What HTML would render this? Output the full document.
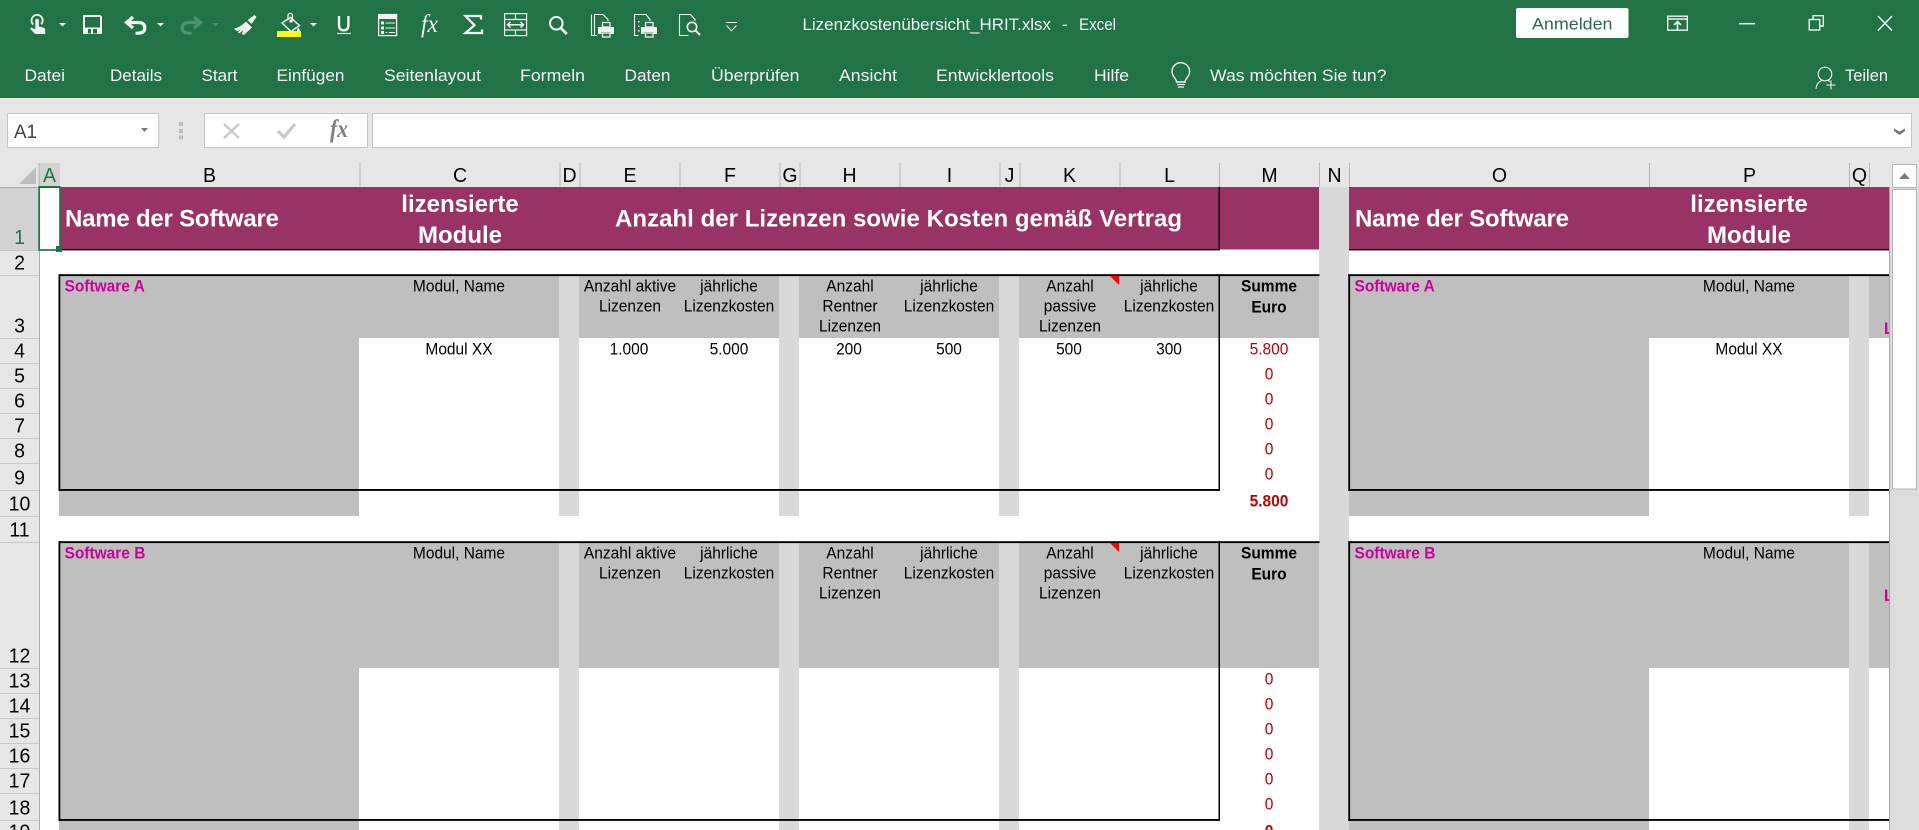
<!DOCTYPE html>
<html lang="de"><head><meta charset="utf-8"><title>Lizenzkostenübersicht_HRIT.xlsx - Excel</title>
<style>
html,body{margin:0;padding:0;width:1919px;height:830px;overflow:hidden;background:#fff}
svg{display:block;font-family:"Liberation Sans",Arial,sans-serif}
.rb{font-size:17px;fill:#f3f3f3}
.hd{font-size:19.5px;fill:#000;text-anchor:middle;transform-box:fill-box;transform-origin:center;transform:translateY(-1.2px) scaleY(1.06)}
.ch{font-size:15.5px;fill:#000;text-anchor:middle;transform-box:fill-box;transform-origin:center;transform:translateY(-.8px) scaleY(1.08)}
.bh{font-size:15.5px;fill:#000;text-anchor:middle;font-weight:bold;transform-box:fill-box;transform-origin:center;transform:translateY(-.8px) scaleY(1.08)}
.mg{font-size:15.5px;fill:#cc0099;font-weight:bold;transform-box:fill-box;transform-origin:center;transform:translateY(-.8px) scaleY(1.08)}
.rd{font-size:15.5px;fill:#c00000;text-anchor:middle;transform-box:fill-box;transform-origin:center;transform:translateY(-.8px) scaleY(1.08)}
.wt{font-size:24px;fill:#fff;font-weight:bold}
</style></head><body>
<svg width="1919" height="830" viewBox="0 0 1919 830" xmlns="http://www.w3.org/2000/svg">
<defs><clipPath id="sheet"><rect x="0" y="187" width="1889" height="643"/></clipPath></defs>
<rect width="1919" height="830" fill="#fff"/>
<!-- ribbon -->
<rect width="1919" height="98" fill="#217346"/>
<rect y="98" width="1919" height="90" fill="#e6e6e6"/>

<!-- QAT icons -->
<g fill="#f2f2f2" stroke="none">
<path d="M35.3 20.5a1.8 1.8 0 0 1 3.6 0v6l4.6 1.3q1.7.5 1.7 2.2v4H35l-5-5.4 1.2-1.2 4.1 2z"/>
<path d="M59 23h7l-3.5 3.5z"/>
<path fill-rule="evenodd" d="M83 15h17.5l1.5 1.5V34H83zM85 17v10.5h15V17zM88 29v4.5h3V29zM93 29v4.5h4V29z"/>
<path d="M157 23h7l-3.5 3.5z"/>
<path d="M310 23h7l-3.5 3.500z"/>
<path d="M246 21.5l6 6-8 7.5-2.2-1 1.6-4-3.8 3.2-1.8-.7 3-3.5-3.5 2.4-2-1.5-1.3-1.4q5-.4 12-6.900z"/>
<path d="M247.500 20l7-5 2 2-5 7z"/>
<path d="M378 14h19v5h-19z"/>
<path d="M381 21.500h3v3h-3zM381 26.500h3v3h-3zM381 31h3v3h-3z"/>
</g>
<path d="M33.200 24.500a5.600 5.600 0 1 1 8-.2" fill="none" stroke="#f2f2f2" stroke-width="1.800"/>
<path d="M133 17l-6.500 5.500 6.500 5.500M127 22.500h11q6.800 0 6.800 5.300t-6.800 5.400h-2.500" fill="none" stroke="#f2f2f2" stroke-width="3.200"/>
<path d="M194 17l6.500 5.500-6.500 5.500M200 22.500h-11q-6.800 0-6.800 5.300t6.800 5.400h2.500" fill="none" stroke="#4f9070" stroke-width="3.200"/>
<path d="M212 23h7l-3.500 3.500z" fill="#4f9070"/>
<g fill="none" stroke="#f2f2f2">
<path d="M290.500 17.500l9 8-8.500 6-9-8.500z" stroke-width="1.500"/>
<path d="M288 20v-4.500a2.200 2.200 0 0 1 4.400 0V21" stroke-width="1.300"/>
<path d="M339 16v9q0 5.300 4.700 5.300t4.700-5.300v-9" stroke-width="2.400"/>
<path d="M337 33.500h14" stroke-width="1.200"/>
<rect x="378.600" y="14.600" width="18" height="21" stroke-width="1.300"/>
<path d="M385.500 23h9.500M385.500 28h9.500M385.500 32.500h2M389 32.500h6" stroke-width="1.100"/>
<path d="M481 19.500V16H465.500l9 9.200-9 7.800H482v-3.500" stroke-width="2.300"/>
<rect x="504.600" y="13.600" width="22" height="22" stroke-width="1.200"/>
<path d="M505 19.500h21.500M505 30h21.500M515.500 14v5.500M515.500 30v5.500" stroke-width="1.200"/>
<path d="M507.500 24.700h16M510.500 22l-3 2.700 3 2.700M520.500 22l3 2.700-3 2.700" stroke-width="1.500"/>
<circle cx="556.300" cy="23.300" r="6.300" stroke-width="2"/>
<path d="M560.800 28l6 6" stroke-width="2.800"/>
<path d="M595.500 35.500h-4V14.500M597 35.500h-2.500V14.500h8.500l5 5v1.500" stroke-width="1.100"/>
<path d="M638.500 35.500h-4V14.500h11.500l4 5v1.500" stroke-width="1.100"/>
<path d="M688.500 35.500h-9V14.500h11l4.500 5v1.500" stroke-width="1.100"/>
<circle cx="692" cy="27" r="4.700" stroke-width="1.600"/>
<path d="M695.500 30.500l4.500 4.500" stroke-width="2"/>
<path d="M726 22.500h11M726.500 25.500l5 5.300 5-5.300" stroke-width="1"/>
</g>
<path d="M298 27q2 3 2 4h-3q0-1 1-4z" fill="#f2f2f2"/>
<rect x="289.500" y="19.500" width="3" height="3" fill="#f2f2f2"/>
<rect x="277" y="31" width="24" height="6" fill="#ffff00"/>
<g fill="#f2f2f2">
<path d="M598 27h16v7h-3.500v-2h-9v2H598z"/>
<path d="M641 27h16v7h-3.500v-2h-9v2H641z"/>
<path d="M638 21h1.500v1.500H638zM638 25.500h1.500V27H638zM638 30h1.500v1.500H638z"/>
</g>
<g fill="none" stroke="#f2f2f2" stroke-width="1.300">
<rect x="602.500" y="22.500" width="7.500" height="4.500"/><rect x="602.500" y="33" width="7.500" height="4"/>
<rect x="645.500" y="22.500" width="7.500" height="4.500"/><rect x="645.500" y="33" width="7.500" height="4"/>
</g>
<text x="421" y="32" font-family="'Liberation Serif',serif" font-style="italic" font-size="25" fill="#f2f2f2" textLength="17" lengthAdjust="spacingAndGlyphs">fx</text>

<!-- title -->
<text x="802.500" y="30" font-size="17" fill="#f3f3f3" textLength="248.500" lengthAdjust="spacingAndGlyphs">Lizenzkostenübersicht_HRIT.xlsx</text>
<text x="1062" y="30" font-size="17" fill="#f3f3f3">-</text>
<text x="1079" y="30" font-size="17" fill="#f3f3f3" textLength="37" lengthAdjust="spacingAndGlyphs">Excel</text>
<rect x="1516" y="8" width="112.500" height="30" rx="2" fill="#fff"/>
<text x="1532" y="29.500" font-size="17" fill="#2a6a49" textLength="80.500" lengthAdjust="spacingAndGlyphs">Anmelden</text>

<!-- window controls -->
<g fill="none" stroke="#f2f2f2" stroke-width="1.400">
<rect x="1667.700" y="16.200" width="19.600" height="14"/>
<path d="M1667.700 19h19.600" stroke-width="1.500"/>
<path d="M1677.500 29.500v-8M1674 25l3.500-3.500 3.500 3.500" stroke-width="1.600"/>
<path d="M1739 23.700h16" stroke-width="1.500"/>
<rect x="1809.200" y="19.500" width="10.500" height="10.500"/>
<path d="M1813 19v-3.300h10.300v10.300h-3.500"/>
<path d="M1878 16l14 14.500M1892 16l-14 14.500" stroke-width="1.500"/>
<circle cx="1825" cy="74" r="6.800" stroke-width="1.100"/>
<path d="M1816 89c0-4 2.500-7 5.800-8.600M1828 80.500l2 1" stroke-width="1.100"/>
<path d="M1831 80.500v9M1826.500 85h9" stroke-width="1.100"/>
<path d="M1176.500 82c0-4-4.500-5-4.500-10.500a8.800 8.800 0 0 1 17.600 0c0 5.500-4.500 6.500-4.500 10.500z" stroke-width="1.400"/>
<path d="M1177 84.500h8M1178 87h6" stroke-width="1.300"/>
</g>

<!-- tabs -->
<text class="rb" x="24.500" y="81" textLength="40.500" lengthAdjust="spacingAndGlyphs">Datei</text>
<text class="rb" x="110" y="81" textLength="52" lengthAdjust="spacingAndGlyphs">Details</text>
<text class="rb" x="201.500" y="81" textLength="36" lengthAdjust="spacingAndGlyphs">Start</text>
<text class="rb" x="276.500" y="81" textLength="68" lengthAdjust="spacingAndGlyphs">Einfügen</text>
<text class="rb" x="384" y="81" textLength="97" lengthAdjust="spacingAndGlyphs">Seitenlayout</text>
<text class="rb" x="520" y="81" textLength="65" lengthAdjust="spacingAndGlyphs">Formeln</text>
<text class="rb" x="624.500" y="81" textLength="46" lengthAdjust="spacingAndGlyphs">Daten</text>
<text class="rb" x="711" y="81" textLength="88.500" lengthAdjust="spacingAndGlyphs">Überprüfen</text>
<text class="rb" x="839" y="81" textLength="58" lengthAdjust="spacingAndGlyphs">Ansicht</text>
<text class="rb" x="936" y="81" textLength="118" lengthAdjust="spacingAndGlyphs">Entwicklertools</text>
<text class="rb" x="1094" y="81" textLength="35" lengthAdjust="spacingAndGlyphs">Hilfe</text>
<text class="rb" x="1210" y="81" textLength="176.500" lengthAdjust="spacingAndGlyphs">Was möchten Sie tun?</text>
<text class="rb" x="1845" y="81" textLength="43" lengthAdjust="spacingAndGlyphs">Teilen</text>

<!-- formula bar -->
<rect x="7.500" y="113.500" width="151" height="34" fill="#fff" stroke="#c6c6c6"/>
<text x="14" y="138" font-size="19px" fill="#444" textLength="23" lengthAdjust="spacingAndGlyphs">A1</text>
<path d="M141 128h7l-3.500 4z" fill="#777"/>
<path d="M179 122h4v4h-4zM179 129h4v4h-4zM179 135.500h4v4h-4z" fill="#bdbdbd"/>
<rect x="204.500" y="113.500" width="163" height="34" fill="#fff" stroke="#c6c6c6"/>
<path d="M224 124l15 14M239 124l-15 14" stroke="#c8c8c8" stroke-width="2.400" fill="none"/>
<path d="M278 131l6 6 11-13" stroke="#c8c8c8" stroke-width="3.200" fill="none"/>
<text x="330" y="137" font-family="'Liberation Serif',serif" font-style="italic" font-weight="bold" font-size="25" fill="#808080" textLength="18" lengthAdjust="spacingAndGlyphs">fx</text>
<rect x="372.500" y="113.500" width="1539" height="34" fill="#fff" stroke="#c6c6c6"/>
<path d="M1894 128.500l5.500 3 5.500-3v2.500l-5.500 4-5.500-4z" fill="#777"/>

<!-- column header -->
<rect x="0" y="163" width="1889" height="24" fill="#e6e6e6"/>
<rect x="39" y="163" width="21" height="24" fill="#d2d2d2"/>
<path d="M19 184l17-17v17z" fill="#bdbdbd"/>
<rect x="0" y="187" width="39" height="643" fill="#e6e6e6"/>
<rect x="0" y="187" width="39" height="63" fill="#d2d2d2"/>
<rect x="39" y="187" width="1" height="643" fill="#adadad"/>
<rect x="0" y="187" width="1889" height="1" fill="#ababab"/>
<g fill="#b6b6b6">
<rect x="38.500" y="163" width="1" height="24"/><rect x="359.500" y="163" width="1" height="24"/><rect x="559.500" y="163" width="1" height="24"/><rect x="579.500" y="163" width="1" height="24"/><rect x="679.500" y="163" width="1" height="24"/><rect x="779.500" y="163" width="1" height="24"/><rect x="799.500" y="163" width="1" height="24"/><rect x="899.500" y="163" width="1" height="24"/><rect x="999.500" y="163" width="1" height="24"/><rect x="1019.500" y="163" width="1" height="24"/><rect x="1119.500" y="163" width="1" height="24"/><rect x="1219" y="163" width="1" height="24"/><rect x="1319" y="163" width="1" height="24"/><rect x="1349" y="163" width="1" height="24"/><rect x="1649" y="163" width="1" height="24"/><rect x="1849" y="163" width="1" height="24"/><rect x="1869" y="163" width="1" height="24"/>
</g>
<g fill="#c8c8c8">
<rect y="250" width="39" height="1"/><rect y="275" width="39" height="1"/><rect y="338" width="39" height="1"/><rect y="363" width="39" height="1"/><rect y="388" width="39" height="1"/><rect y="413" width="39" height="1"/><rect y="438" width="39" height="1"/><rect y="463" width="39" height="1"/><rect y="490" width="39" height="1"/><rect y="516" width="39" height="1"/><rect y="542" width="39" height="1"/><rect y="668" width="39" height="1"/><rect y="693" width="39" height="1"/><rect y="718" width="39" height="1"/><rect y="743" width="39" height="1"/><rect y="768" width="39" height="1"/><rect y="793" width="39" height="1"/><rect y="820" width="39" height="1"/>
</g>
<text class="hd" x="49.500" y="183" style="fill:#217346">A</text>
<text class="hd" x="209.500" y="183">B</text><text class="hd" x="460" y="183">C</text><text class="hd" x="569.500" y="183">D</text><text class="hd" x="630" y="183">E</text><text class="hd" x="730" y="183">F</text><text class="hd" x="790" y="183">G</text><text class="hd" x="849.500" y="183">H</text><text class="hd" x="949.500" y="183">I</text><text class="hd" x="1009.500" y="183">J</text><text class="hd" x="1069.500" y="183">K</text><text class="hd" x="1169.500" y="183">L</text><text class="hd" x="1269.500" y="183">M</text><text class="hd" x="1334.500" y="183">N</text><text class="hd" x="1499.500" y="183">O</text><text class="hd" x="1749.500" y="183">P</text><text class="hd" x="1859.500" y="183">Q</text>
<!-- row numbers -->
<text class="hd" x="19.500" y="245" style="fill:#217346">1</text>
<text class="hd" x="19.500" y="270.500">2</text><text class="hd" x="19.500" y="333.500">3</text><text class="hd" x="19.500" y="358.500">4</text><text class="hd" x="19.500" y="383.500">5</text><text class="hd" x="19.500" y="408.500">6</text><text class="hd" x="19.500" y="433.500">7</text><text class="hd" x="19.500" y="458.500">8</text><text class="hd" x="19.500" y="485.500">9</text><text class="hd" x="19.500" y="511.500">10</text><text class="hd" x="19.500" y="537.500">11</text><text class="hd" x="19.500" y="663.500">12</text><text class="hd" x="19.500" y="688.500">13</text><text class="hd" x="19.500" y="713.500">14</text><text class="hd" x="19.500" y="738.500">15</text><text class="hd" x="19.500" y="763.500">16</text><text class="hd" x="19.500" y="788.500">17</text><text class="hd" x="19.500" y="815.500">18</text><text class="hd" x="19.500" y="839.500">19</text>

<!-- sheet -->
<g clip-path="url(#sheet)">
<rect x="60" y="187" width="1259" height="62.500" fill="#993366"/>
<rect x="1349" y="187" width="540" height="62.500" fill="#993366"/>
<rect x="1319" y="187" width="30" height="643" fill="#d9d9d9"/>
<g fill="#bfbfbf">
<rect x="59" y="275" width="1260" height="63"/><rect x="59" y="275" width="300" height="241"/>
<rect x="1349" y="275" width="540" height="63"/><rect x="1349" y="275" width="300" height="241"/>
<rect x="59" y="542" width="1260" height="126"/><rect x="59" y="542" width="300" height="288"/>
<rect x="1349" y="542" width="540" height="126"/><rect x="1349" y="542" width="300" height="288"/>
</g>
<g fill="#d9d9d9">
<rect x="559" y="275" width="20" height="241"/><rect x="779" y="275" width="20" height="241"/><rect x="999" y="275" width="20" height="241"/><rect x="1849" y="275" width="20" height="241"/>
<rect x="559" y="542" width="20" height="288"/><rect x="779" y="542" width="20" height="288"/><rect x="999" y="542" width="20" height="288"/><rect x="1849" y="542" width="20" height="288"/>
</g>
<g fill="#000">
<rect x="60" y="249" width="1160" height="1.400"/><rect x="1349" y="249" width="540" height="1.400"/><rect x="1218.500" y="187" width="1.500" height="63"/>
<rect x="58.500" y="274.200" width="1261" height="1.900"/><rect x="58.500" y="489" width="1161.500" height="1.900"/><rect x="58.500" y="274.200" width="1.800" height="216.700"/><rect x="1218.500" y="274.200" width="1.500" height="216.700"/>
<rect x="1348.300" y="274.200" width="541" height="1.900"/><rect x="1348.300" y="489" width="541" height="1.900"/><rect x="1348.300" y="274.200" width="1.800" height="216.700"/>
<rect x="58.500" y="541.200" width="1261" height="1.900"/><rect x="58.500" y="819" width="1161.500" height="1.900"/><rect x="58.500" y="541.200" width="1.800" height="279.700"/><rect x="1218.500" y="541.200" width="1.500" height="279.700"/>
<rect x="1348.300" y="541.200" width="541" height="1.900"/><rect x="1348.300" y="819" width="541" height="1.900"/><rect x="1348.300" y="541.200" width="1.800" height="279.700"/>
</g>
<path d="M1110 276h9v9zM1110 543h9v9z" fill="#ff0000"/>

<text class="wt" x="65" y="226.500" textLength="214" lengthAdjust="spacing">Name der Software</text>
<text class="wt" x="460" y="212" text-anchor="middle">lizensierte</text>
<text class="wt" x="460" y="243" text-anchor="middle">Module</text>
<text class="wt" x="615" y="226.500" textLength="567" lengthAdjust="spacing">Anzahl der Lizenzen sowie Kosten gemäß Vertrag</text>
<text class="wt" x="1355" y="226.500" textLength="214" lengthAdjust="spacing">Name der Software</text>
<text class="wt" x="1749" y="212" text-anchor="middle">lizensierte</text>
<text class="wt" x="1749" y="243" text-anchor="middle">Module</text>

<!-- block A -->
<text class="mg" x="64.500" y="292">Software A</text>
<text class="ch" x="459" y="292">Modul, Name</text>
<text class="ch" x="630" y="292">Anzahl aktive</text><text class="ch" x="630" y="312">Lizenzen</text>
<text class="ch" x="729" y="292">jährliche</text><text class="ch" x="729" y="312">Lizenzkosten</text>
<text class="ch" x="850" y="292">Anzahl</text><text class="ch" x="850" y="312">Rentner</text><text class="ch" x="850" y="332">Lizenzen</text>
<text class="ch" x="949" y="292">jährliche</text><text class="ch" x="949" y="312">Lizenzkosten</text>
<text class="ch" x="1070" y="292">Anzahl</text><text class="ch" x="1070" y="312">passive</text><text class="ch" x="1070" y="332">Lizenzen</text>
<text class="ch" x="1169" y="292">jährliche</text><text class="ch" x="1169" y="312">Lizenzkosten</text>
<text class="bh" x="1269" y="292">Summe</text><text class="bh" x="1269" y="313">Euro</text>
<text class="ch" x="459" y="355">Modul XX</text><text class="ch" x="629" y="355">1.000</text><text class="ch" x="729" y="355">5.000</text><text class="ch" x="849" y="355">200</text><text class="ch" x="949" y="355">500</text><text class="ch" x="1069" y="355">500</text><text class="ch" x="1169" y="355">300</text>
<text class="rd" x="1269" y="355">5.800</text>
<text class="rd" x="1269" y="380">0</text><text class="rd" x="1269" y="405">0</text><text class="rd" x="1269" y="430">0</text><text class="rd" x="1269" y="455">0</text><text class="rd" x="1269" y="480">0</text>
<text class="rd" x="1269" y="507" font-weight="bold">5.800</text>
<text class="mg" x="1354.500" y="292">Software A</text>
<text class="ch" x="1749" y="292">Modul, Name</text>
<text class="ch" x="1749" y="355">Modul XX</text>
<text class="mg" x="1884" y="334.500">L</text>

<!-- block B -->
<text class="mg" x="64.500" y="559">Software B</text>
<text class="ch" x="459" y="559">Modul, Name</text>
<text class="ch" x="630" y="559">Anzahl aktive</text><text class="ch" x="630" y="579">Lizenzen</text>
<text class="ch" x="729" y="559">jährliche</text><text class="ch" x="729" y="579">Lizenzkosten</text>
<text class="ch" x="850" y="559">Anzahl</text><text class="ch" x="850" y="579">Rentner</text><text class="ch" x="850" y="599">Lizenzen</text>
<text class="ch" x="949" y="559">jährliche</text><text class="ch" x="949" y="579">Lizenzkosten</text>
<text class="ch" x="1070" y="559">Anzahl</text><text class="ch" x="1070" y="579">passive</text><text class="ch" x="1070" y="599">Lizenzen</text>
<text class="ch" x="1169" y="559">jährliche</text><text class="ch" x="1169" y="579">Lizenzkosten</text>
<text class="bh" x="1269" y="559">Summe</text><text class="bh" x="1269" y="580">Euro</text>
<text class="rd" x="1269" y="685">0</text><text class="rd" x="1269" y="710">0</text><text class="rd" x="1269" y="735">0</text><text class="rd" x="1269" y="760">0</text><text class="rd" x="1269" y="785">0</text><text class="rd" x="1269" y="810">0</text>
<text class="rd" x="1269" y="837" font-weight="bold">0</text>
<text class="mg" x="1354.500" y="559">Software B</text>
<text class="ch" x="1749" y="559">Modul, Name</text>
<text class="mg" x="1884" y="601.500">L</text>
</g>

<!-- selection -->
<rect x="39.200" y="187.200" width="20.800" height="62.800" fill="#fff" stroke="#217346" stroke-width="1.700"/>
<rect x="56" y="246" width="6" height="6" fill="#217346"/>
<rect x="39" y="186" width="21" height="1.200" fill="#217346"/>

<!-- scrollbar -->
<rect x="1889" y="163" width="30" height="24" fill="#e6e6e6"/>
<rect x="1890" y="187" width="29" height="643" fill="#dcdcdc"/>
<rect x="1889" y="187" width="1" height="643" fill="#a6a6a6"/>
<rect x="1892.500" y="164.500" width="24" height="23" fill="#fff" stroke="#b4b4b4"/>
<path d="M1899 179l5.500-6 5.500 6z" fill="#7a7a7a"/>
<rect x="1892.500" y="189.500" width="24" height="299.500" fill="#fff" stroke="#b4b4b4"/>
</svg>
</body></html>
